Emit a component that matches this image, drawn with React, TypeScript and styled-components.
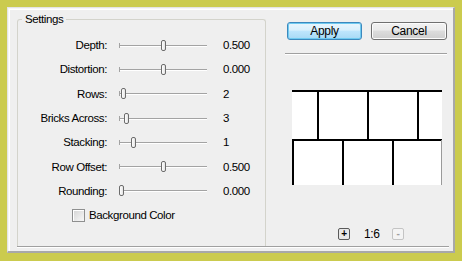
import React from 'react';
import styled, { createGlobalStyle } from 'styled-components';

const GlobalStyle = createGlobalStyle`
  html, body {
    margin: 0;
    padding: 0;
    background: #cbcb4e;
  }
  body {
    font-family: 'Liberation Sans', Arial, sans-serif;
    font-size: 11.5px;
    letter-spacing: -0.4px;
    color: #000;
  }
`;

const Page = styled.div`
  width: 462px;
  height: 261px;
  box-sizing: border-box;
  padding: 7px 7px 8px 7px;
`;

const Window = styled.div`
  width: 448px;
  height: 246px;
  box-sizing: border-box;
  background: #efefef;
  border-top: 1px solid #e4e4e4;
  border-left: 1px solid #e4e4e4;
  border-right: 2px solid #a8a8a8;
  border-bottom: 2px solid #a8a8a8;
  box-shadow: inset 1px 1px 0 #f6f6f6, inset 2px 2px 0 #ffffff;
  display: flex;
  flex-direction: column;
  padding: 4px 4px 0 9px;
`;

const Body = styled.div`
  display: flex;
  flex: 1;
`;

const BottomRule = styled.div`
  height: 0;
  margin: 0 0 3px 0;
  border-top: 1px solid #a0a0a0;
  border-bottom: 1px solid #ffffff;
`;

const GroupBox = styled.fieldset`
  box-sizing: border-box;
  width: 249px;
  margin: 0;
  padding: 7px 0 0 0;
  border: 1px solid #d3d3cb;
  border-bottom: none;
  border-radius: 3px 3px 0 0;
  min-width: 0;
`;

const Legend = styled.legend`
  padding: 0 3px;
  margin-left: 4px;
  line-height: 14px;
`;

const Grid = styled.div`
  display: grid;
  grid-template-columns: 89px 88px auto;
  grid-auto-rows: 24.3px;
  column-gap: 12px;
  align-items: center;
`;

const Label = styled.span`
  text-align: right;
  white-space: nowrap;
`;

const Value = styled.span`
  margin-left: 4px;
`;

const Slider = styled.div`
  position: relative;
  height: 11px;
  &::before {
    content: '';
    position: absolute;
    left: 0;
    right: 0;
    top: 5px;
    border-top: 1px solid #a3a3a3;
    border-bottom: 1px solid #ffffff;
  }
  &::after {
    content: '';
    position: absolute;
    left: 0;
    top: 3px;
    height: 5px;
    border-left: 1px solid #a3a3a3;
  }
`;

const Thumb = styled.span`
  position: absolute;
  top: 0;
  width: 5px;
  height: 11px;
  box-sizing: border-box;
  border: 1px solid #6c6c6c;
  border-radius: 2px;
  background: linear-gradient(to right, #ffffff, #e4e4e4);
  z-index: 1;
`;

const CheckRow = styled.label`
  grid-column: 1 / span 3;
  display: flex;
  align-items: center;
  gap: 4px;
  margin-left: 54px;
`;

const CheckBox = styled.span`
  width: 13px;
  height: 13px;
  box-sizing: border-box;
  border: 1px solid #8e8f8f;
  background: linear-gradient(135deg, #d4d4d4, #f8f8f8);
  box-shadow: inset 1px 1px 0 #ffffff;
`;

const RightPanel = styled.div`
  width: 162px;
  margin-left: 19px;
  display: flex;
  flex-direction: column;
  padding-top: 10px;
`;

const ButtonRow = styled.div`
  display: flex;
  gap: 9px;
  padding-left: 2px;
`;

const Button = styled.button<{ $primary?: boolean }>`
  width: ${(p) => (p.$primary ? '75px' : '76px')};
  height: 18px;
  padding: 0;
  font-family: inherit;
  font-size: 12px;
  letter-spacing: -0.3px;
  color: #000;
  border-radius: 3px;
  border: 1px solid ${(p) => (p.$primary ? '#3c88bd' : '#707070')};
  background: ${(p) =>
    p.$primary
      ? 'linear-gradient(to bottom, #eaf6fd 0%, #d9f0fc 45%, #bee6fd 50%, #a7d9f5 100%)'
      : 'linear-gradient(to bottom, #f2f2f2 0%, #ebebeb 45%, #dddddd 50%, #cfcfcf 100%)'};
  box-shadow: inset 0 0 0 1px ${(p) => (p.$primary ? '#6fcaf0' : '#fcfcfc')};
`;

const Separator = styled.div`
  margin-top: 13px;
  border-top: 1px solid #a0a0a0;
  border-bottom: 1px solid #ffffff;
`;

const Preview = styled.div`
  margin: 35px 0 0 7px;
  width: 150px;
  height: 95px;
  background: #ffffff;
  svg {
    display: block;
  }
`;

const ZoomBar = styled.div`
  margin-top: 43px;
  display: flex;
  align-items: center;
  padding-left: 53px;
  height: 12px;
`;

const ZoomButton = styled.span<{ $disabled?: boolean }>`
  width: 12px;
  height: 12px;
  box-sizing: border-box;
  border: 1px solid ${(p) => (p.$disabled ? '#c4c4c4' : '#5a5a5a')};
  border-radius: 2px;
  background: ${(p) => (p.$disabled ? '#f4f4f4' : '#e8e8e8')};
  color: ${(p) => (p.$disabled ? '#a0a0a0' : '#000')};
  font-size: 10px;
  line-height: 9px;
  text-align: center;
  font-weight: bold;
`;

const ZoomText = styled.span`
  width: 17px;
  margin: 0 11px 0 14px;
  font-size: 12px;
`;

const rows = [
  { label: 'Depth:', pos: 0.5, value: '0.500' },
  { label: 'Distortion:', pos: 0.5, value: '0.000' },
  { label: 'Rows:', pos: 0.03, value: '2' },
  { label: 'Bricks Across:', pos: 0.06, value: '3' },
  { label: 'Stacking:', pos: 0.145, value: '1' },
  { label: 'Row Offset:', pos: 0.5, value: '0.500' },
  { label: 'Rounding:', pos: 0, value: '0.000' },
];

const TRACK = 88;
const THUMB = 5;

const BrickPreview = () => (
  <svg width="150" height="95" viewBox="0 0 150 95">
    <g stroke="#000" strokeWidth="2">
      <line x1="0" y1="1" x2="150" y2="1" />
      <line x1="26" y1="0" x2="26" y2="50" />
      <line x1="76" y1="0" x2="76" y2="50" />
      <line x1="126" y1="0" x2="126" y2="50" />
      <line x1="0" y1="50" x2="150" y2="50" />
      <line x1="1" y1="50" x2="1" y2="95" />
      <line x1="51" y1="50" x2="51" y2="95" />
      <line x1="101" y1="50" x2="101" y2="95" />
    </g>
    <line x1="149.5" y1="50" x2="149.5" y2="95" stroke="#9a9a9a" strokeWidth="1" />
  </svg>
);

export default function App() {
  return (
    <>
      <GlobalStyle />
      <Page>
        <Window>
          <Body>
            <GroupBox>
              <Legend>Settings</Legend>
              <Grid>
                {rows.map((r) => (
                  <React.Fragment key={r.label}>
                    <Label>{r.label}</Label>
                    <Slider>
                      <Thumb style={{ left: Math.round(r.pos * (TRACK - THUMB)) }} />
                    </Slider>
                    <Value>{r.value}</Value>
                  </React.Fragment>
                ))}
                <CheckRow>
                  <CheckBox />
                  Background Color
                </CheckRow>
              </Grid>
            </GroupBox>
            <RightPanel>
              <ButtonRow>
                <Button $primary>Apply</Button>
                <Button>Cancel</Button>
              </ButtonRow>
              <Separator />
              <Preview>
                <BrickPreview />
              </Preview>
              <ZoomBar>
                <ZoomButton>+</ZoomButton>
                <ZoomText>1:6</ZoomText>
                <ZoomButton $disabled>-</ZoomButton>
              </ZoomBar>
            </RightPanel>
          </Body>
          <BottomRule />
        </Window>
      </Page>
    </>
  );
}
